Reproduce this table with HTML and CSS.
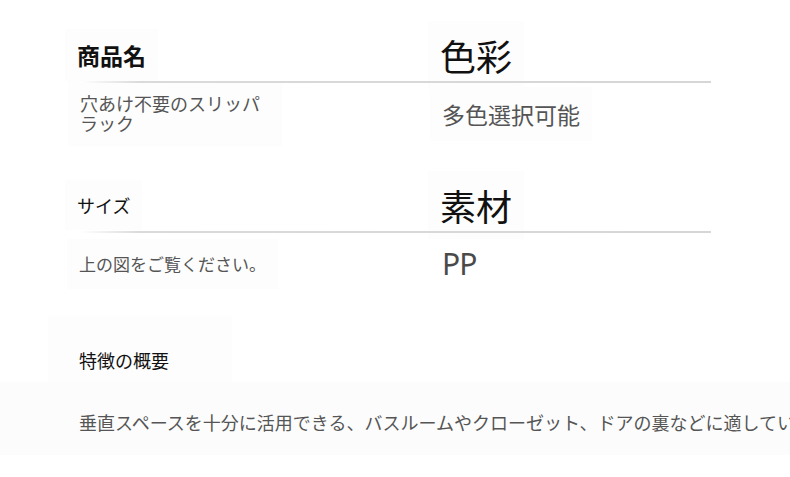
FILE: index.html
```html
<!DOCTYPE html>
<html lang="ja">
<head>
<meta charset="utf-8">
<title>商品仕様</title>
<link rel="stylesheet" href="styles.css">
</head>
<body>
<main class="page">
  <section class="spec-row">
    <div class="spec-head">
      <div class="cell-left"><span class="label label-bold tint">商品名</span></div>
      <div class="cell-right"><span class="label label-big tint">色彩</span></div>
    </div>
    <div class="divider"></div>
    <div class="spec-value">
      <div class="cell-left"><span class="value value-wrap tint">穴あけ不要のスリッパラック</span></div>
      <div class="cell-right"><span class="value value-mid tint">多色選択可能</span></div>
    </div>
  </section>

  <section class="spec-row">
    <div class="spec-head">
      <div class="cell-left"><span class="label label-small tint">サイズ</span></div>
      <div class="cell-right"><span class="label label-big tint">素材</span></div>
    </div>
    <div class="divider"></div>
    <div class="spec-value">
      <div class="cell-left"><span class="value value-small tint">上の図をご覧ください。</span></div>
      <div class="cell-right"><span class="value value-pp">PP</span></div>
    </div>
  </section>

  <section class="feature">
    <div class="feature-head"><span class="label label-small">特徴の概要</span></div>
    <div class="feature-body">
      <p class="feature-text">垂直スペースを十分に活用できる、バスルームやクローゼット、ドアの裏などに適しています。</p>
    </div>
  </section>
</main>
</body>
</html>
```

FILE: styles.css
```css
* { box-sizing: border-box; }

html, body {
  margin: 0;
  padding: 0;
  background: #ffffff;
  overflow: hidden;
}

body {
  width: 790px;
  height: 477px;
  font-family: "Noto Sans CJK JP", "Noto Sans", sans-serif;
  color: #111;
}

.page {
  padding-top: 16px;
}

.spec-row {
  margin-left: 48px;
  width: 663px;
  margin-bottom: 21px;
}

.spec-head {
  display: grid;
  grid-template-columns: 367px 296px;
  height: 65px;
}

.spec-value {
  display: grid;
  grid-template-columns: 367px 296px;
  height: 62px;
}

.cell-left,
.cell-right {
  display: flex;
  align-items: center;
}

.spec-head .cell-left,
.spec-head .cell-right {
  padding-top: 12px;
}

.tint {
  background: #fdfdfd;
  box-shadow: 0 0 0 12px #fdfdfd;
}

.spec-head .cell-left .label { margin-left: 29px; }
.spec-head .cell-right .label { margin-left: 25px; }
.spec-value .cell-left .value { margin-left: 32px; }
.spec-value .cell-right .value { margin-left: 27px; }

.label {
  color: #111;
  display: inline-block;
}

.label-bold {
  font-size: 23px;
  font-weight: 700;
  line-height: 28px;
}

.label-big {
  font-size: 36px;
  font-weight: 400;
  line-height: 44px;
}

.label-small {
  font-size: 18px;
  line-height: 26px;
}

.divider {
  position: relative;
  z-index: 1;
  height: 2px;
  margin-left: 32px;
  background: linear-gradient(to right, #ffffff 0, #dadada 60px, #d6d6d6 100%);
}

.value {
  color: #555;
  display: inline-block;
}

.value-wrap {
  font-size: 18px;
  line-height: 20.5px;
  width: 190px;
  margin-top: -2px;
}

.value-mid {
  font-size: 23px;
  line-height: 30px;
}

.value-small {
  font-size: 17px;
  line-height: 26px;
}

.spec-value .cell-left .value-small { margin-left: 31px; }

.value-pp {
  font-family: "Noto Sans", "Open Sans", sans-serif;
  font-size: 30px;
  line-height: 36px;
  letter-spacing: -1px;
  color: #4a4a4a;
}

.feature-head {
  margin-left: 48px;
  width: 184px;
  height: 66px;
  padding: 30px 0 0 31px;
  background: #fdfdfd;
  margin-top: 4px;
}

.feature-head .label {
  line-height: 28px;
  font-size: 18px;
}

.feature-body {
  height: 73px;
  background: #fcfcfc;
  padding-top: 26px;
}

.feature-text {
  margin: 0 0 0 79px;
  font-size: 18px;
  line-height: 28px;
  color: #555;
  white-space: nowrap;
}
```
